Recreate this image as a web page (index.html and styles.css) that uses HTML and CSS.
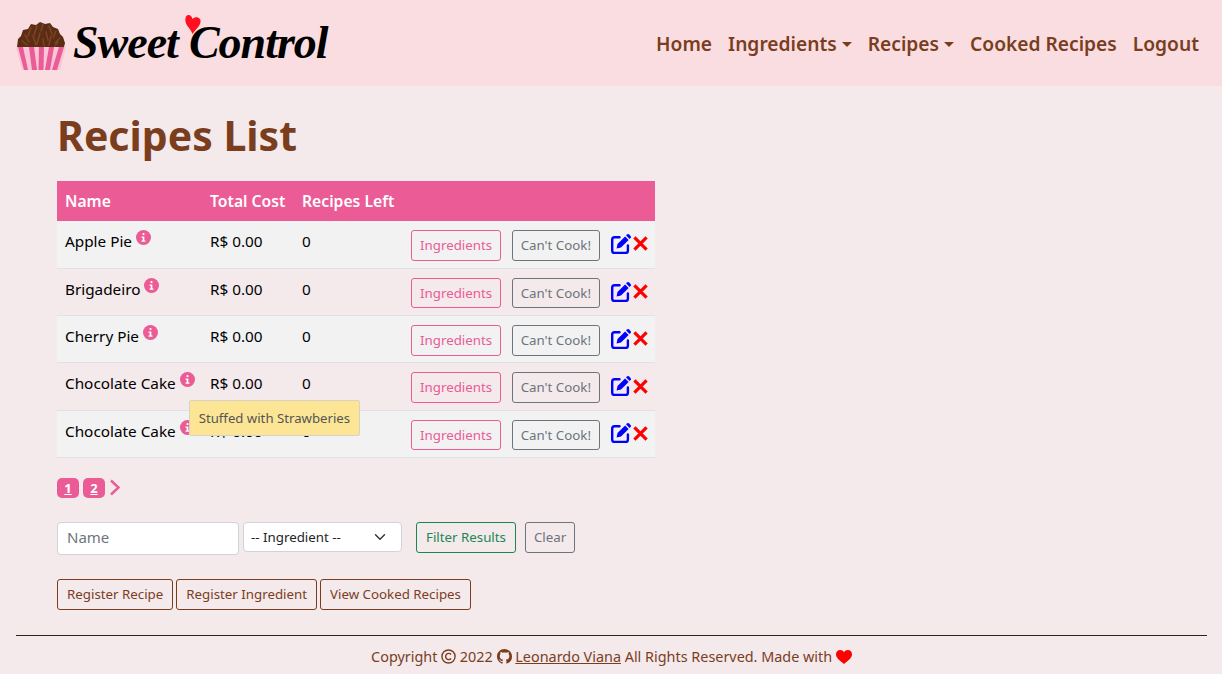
FILE: index.html
```html
<!DOCTYPE html>
<html lang="en">
<head>
  <meta charset="UTF-8" />
  <meta name="viewport" content="width=device-width, initial-scale=1" />
  <title>Sweet Control</title>
  <link rel="stylesheet" href="styles.css">
</head>
<body>

<svg class="icon-defs" width="0" height="0">
  <symbol id="icon-info" viewBox="0 0 16 16">
    <circle cx="8" cy="8" r="8" fill="#eb5b96"/>
    <rect x="6.900" y="3.200" width="2.200" height="2.200" rx="1" fill="#fff"/>
    <path d="M5.900 7h3v4.200h1.200v1.300H5.900v-1.300h1.200V8.300H5.900z" fill="#fff"/>
  </symbol>
  <symbol id="icon-edit" viewBox="0 0 20 20">
    <path d="M8.500 3.300H3.500A2.300 2.300 0 0 0 1.200 5.600v11.100A2.300 2.300 0 0 0 3.500 19h11.100a2.300 2.300 0 0 0 2.300-2.300V11.500" fill="none" stroke="#0000ff" stroke-width="2.400" stroke-linecap="round"/>
    <path d="M5.600 14.400l.9-4.400 7.600-7.600 3.500 3.500-7.600 7.600z" fill="#0000ff"/>
    <path d="M15.100 1.400l.9-.9a1.500 1.500 0 0 1 2.100 0l1.400 1.400a1.500 1.500 0 0 1 0 2.100l-.9.9z" fill="#0000ff"/>
  </symbol>
  <symbol id="icon-cross" viewBox="0 0 16 16">
    <path d="M1.500 1.500l13 13M14.500 1.500l-13 13" fill="none" stroke="#ff0000" stroke-width="3.400"/>
  </symbol>
</svg>

<nav class="navbar">
  <a class="brand" href="#">
    <svg class="brand-cupcake" width="50" height="49" viewBox="0 0 50 49">
      <path d="M0 26h50l-6 23H6z" fill="#f8c6d6"/>
      <path d="M2 26h5l5 23H8zM13 26h5l3 23h-5zM23 26h5l-.5 23h-5zM33 26h5l-4 23h-5zM43 26h5l-7 23h-5z" fill="#eb5b96"/>
      <path d="M1 26L2 18 5 15 7 9 12 8 15 3 20 4 24 1 29 3 34 2 37 6 42 8 44 13 47 16 49 22 48 26z" fill="#5a2d14"/>
      <path d="M9 14l4 7M15 7l-3 8M21 5l-3 9M27 3l-2 7M33 5l3 8M40 10l-3 7M44 17l-5 5M6 20l5 4M17 15l3 9M24 12l-3 11M30 11l2 8M35 15l-2 9M42 21l-3 4M27 18l1 7" stroke="#7d4424" stroke-width="1.500" stroke-linecap="round"/>
    </svg>
    <span class="brand-text">Sweet<span class="brand-gap"></span>Control</span>
    <svg class="brand-heart" width="16" height="19" viewBox="0 0 16 19">
      <path d="M7.500 19C6 14 1 11 .4 6 0 2 1.500 0 3.500 0 5.500 0 6.800 1.500 7.500 4 9 2.500 11 1.800 13 2.500c2.500 1 3.200 3.500 2 6.500-1.500 3.500-5 6-7.500 10z" fill="#ff0f1f"/>
    </svg>
  </a>
  <ul class="nav-links">
    <li><a href="#">Home</a></li>
    <li><a href="#" class="caret">Ingredients</a></li>
    <li><a href="#" class="caret">Recipes</a></li>
    <li><a href="#">Cooked Recipes</a></li>
    <li><a href="#">Logout</a></li>
  </ul>
</nav>

<main class="content">
  <h1>Recipes List</h1>

  <table class="recipes">
    <colgroup><col class="col-name"><col class="col-cost"><col class="col-left"><col></colgroup>
    <thead>
      <tr><th>Name</th><th>Total Cost</th><th>Recipes Left</th><th></th></tr>
    </thead>
    <tbody>
      <tr>
        <td>Apple Pie <svg class="info"><use href="#icon-info"/></svg></td>
        <td>R$ 0.00</td><td>0</td>
        <td class="cell-actions"><div class="actions"><a class="btn btn-pink" href="#">Ingredients</a><a class="btn btn-grey" href="#">Can't Cook!</a><span class="row-icons"><svg class="edit"><use href="#icon-edit"/></svg><svg class="cross"><use href="#icon-cross"/></svg></span></div></td>
      </tr>
      <tr>
        <td>Brigadeiro <svg class="info"><use href="#icon-info"/></svg></td>
        <td>R$ 0.00</td><td>0</td>
        <td class="cell-actions"><div class="actions"><a class="btn btn-pink" href="#">Ingredients</a><a class="btn btn-grey" href="#">Can't Cook!</a><span class="row-icons"><svg class="edit"><use href="#icon-edit"/></svg><svg class="cross"><use href="#icon-cross"/></svg></span></div></td>
      </tr>
      <tr>
        <td>Cherry Pie <svg class="info"><use href="#icon-info"/></svg></td>
        <td>R$ 0.00</td><td>0</td>
        <td class="cell-actions"><div class="actions"><a class="btn btn-pink" href="#">Ingredients</a><a class="btn btn-grey" href="#">Can't Cook!</a><span class="row-icons"><svg class="edit"><use href="#icon-edit"/></svg><svg class="cross"><use href="#icon-cross"/></svg></span></div></td>
      </tr>
      <tr>
        <td>Chocolate Cake <span class="info-wrap"><svg class="info"><use href="#icon-info"/></svg><span class="tooltip">Stuffed with Strawberies</span></span></td>
        <td>R$ 0.00</td><td>0</td>
        <td class="cell-actions"><div class="actions"><a class="btn btn-pink" href="#">Ingredients</a><a class="btn btn-grey" href="#">Can't Cook!</a><span class="row-icons"><svg class="edit"><use href="#icon-edit"/></svg><svg class="cross"><use href="#icon-cross"/></svg></span></div></td>
      </tr>
      <tr>
        <td>Chocolate Cake <svg class="info"><use href="#icon-info"/></svg></td>
        <td>R$ 0.00</td><td>0</td>
        <td class="cell-actions"><div class="actions"><a class="btn btn-pink" href="#">Ingredients</a><a class="btn btn-grey" href="#">Can't Cook!</a><span class="row-icons"><svg class="edit"><use href="#icon-edit"/></svg><svg class="cross"><use href="#icon-cross"/></svg></span></div></td>
      </tr>
    </tbody>
  </table>

  <div class="pagination">
    <a class="page" href="#">1</a>
    <a class="page" href="#">2</a>
    <svg class="page-next" width="12" height="17" viewBox="0 0 12 17"><path d="M2 1.500L9.500 8.500 2 15.500" fill="none" stroke="#eb5b96" stroke-width="2.400"/></svg>
  </div>

  <form class="filters">
    <input class="filter-name" type="text" placeholder="Name">
    <select class="filter-select"><option>-- Ingredient --</option></select>
    <a class="btn btn-green" href="#">Filter Results</a>
    <a class="btn btn-grey" href="#">Clear</a>
  </form>

  <div class="links">
    <a class="btn btn-brown" href="#">Register Recipe</a>
    <a class="btn btn-brown" href="#">Register Ingredient</a>
    <a class="btn btn-brown" href="#">View Cooked Recipes</a>
  </div>
</main>

<footer>
  <hr>
  <p>Copyright
    <svg class="copy" width="15" height="15" viewBox="0 0 16 16"><circle cx="8" cy="8" r="7" fill="none" stroke="#7a3e1f" stroke-width="1.500"/><path d="M10.700 5.800a3.300 3.300 0 1 0 0 4.400" fill="none" stroke="#7a3e1f" stroke-width="1.500"/></svg>
    2022
    <svg class="github" width="15" height="15" viewBox="0 0 16 16"><path fill="#7a3e1f" d="M8 0C3.580 0 0 3.580 0 8c0 3.540 2.290 6.530 5.470 7.590.4.070.55-.17.55-.38 0-.19-.01-.82-.01-1.490-2.010.37-2.530-.49-2.690-.94-.09-.23-.48-.94-.82-1.130-.28-.15-.68-.52-.01-.53.63-.01 1.080.58 1.230.82.72 1.210 1.870.87 2.330.66.07-.52.28-.87.51-1.070-1.780-.2-3.640-.89-3.640-3.950 0-.87.31-1.590.82-2.150-.08-.2-.36-1.020.08-2.120 0 0 .67-.21 2.200.82.64-.18 1.320-.27 2-.27.68 0 1.360.09 2 .27 1.530-1.040 2.200-.82 2.200-.82.44 1.100.16 1.920.08 2.120.51.56.82 1.270.82 2.150 0 3.070-1.870 3.750-3.650 3.950.29.25.54.73.54 1.480 0 1.070-.01 1.930-.01 2.200 0 .21.15.46.55.38A8.013 8.013 0 0 0 16 8c0-4.420-3.580-8-8-8z"/></svg>
    <a href="#">Leonardo Viana</a> All Rights Reserved. Made with
    <svg class="heart" width="16" height="14" viewBox="0 0 16 14"><path fill="#ff0000" d="M8 14C3 10 0 7.500 0 4.200 0 1.800 1.800 0 4.200 0 5.800 0 7.200.8 8 2.200 8.800.8 10.200 0 11.800 0 14.200 0 16 1.800 16 4.200 16 7.500 13 10 8 14z"/></svg>
  </p>
</footer>

</body>
</html>
```

FILE: styles.css
```css
* {
  box-sizing: border-box;
}
body {
  font-family: "Noto Sans", sans-serif;
  font-size: 15.300px;
  line-height: 24px;
  background-color: #f4e9eb;
  color: #000;
  margin: 0;
  padding: 0;
}
a {
  text-decoration: none;
}
.icon-defs {
  display: block;
  height: 0;
}

/* navbar */
.navbar {
  display: flex;
  justify-content: space-between;
  align-items: center;
  height: 86px;
  padding: 0 15px 0 16px;
  background-color: #f9dde1;
}
.brand {
  position: relative;
  display: flex;
  align-items: center;
  color: #000;
}
.brand-cupcake {
  flex: none;
  margin-top: 5px;
}
.brand-text {
  margin-left: 7px;
  font-family: "Liberation Serif", serif;
  font-style: italic;
  font-weight: bold;
  font-size: 46px;
  line-height: 1;
  white-space: nowrap;
  letter-spacing: -1px;
}
.brand-gap {
  display: inline-block;
  width: 11px;
}
.brand-heart {
  position: absolute;
  left: 169px;
  top: -1px;
}
.nav-links {
  display: flex;
  list-style: none;
  margin: 0;
  padding: 2px 0 0;
}
.nav-links a {
  display: block;
  padding: 0 8px;
  color: #7a3e1f;
  font-size: 19.200px;
  line-height: 30px;
  font-weight: 600;
}
.caret::after {
  content: "";
  display: inline-block;
  margin-left: 5px;
  vertical-align: 4px;
  border-top: 5px solid #7a3e1f;
  border-left: 5px solid transparent;
  border-right: 5px solid transparent;
}

/* content */
.content {
  padding: 0 41px 0 57px;
}
h1 {
  margin: 20px 0 16px;
  color: #7a3e1f;
  font-size: 41px;
  line-height: 59px;
  font-weight: bold;
}
.recipes {
  width: 598px;
  table-layout: fixed;
  border-collapse: collapse;
}
.col-name {
  width: 145px;
}
.col-cost {
  width: 92px;
}
.col-left {
  width: 109px;
}
.recipes th {
  height: 40px;
  padding: 0 8px;
  background-color: #eb5b96;
  color: #fff;
  text-align: left;
  font-size: 15.700px;
  font-weight: 600;
  white-space: nowrap;
}
.recipes td {
  height: 47.300px;
  padding: 8px 8px 0;
  vertical-align: top;
  border-bottom: 1px solid #dee2e6;
  white-space: nowrap;
}
.recipes td.cell-actions {
  padding-top: 9px;
}
.recipes tbody tr:nth-child(odd) td {
  background-color: #f2f2f2;
}
.actions {
  display: flex;
  align-items: center;
}
.actions .btn-grey {
  padding: 4px 7.500px;
}
.info-wrap {
  position: relative;
}
.info {
  width: 15px;
  height: 15px;
  vertical-align: top;
  margin-top: 1px;
}
.tooltip {
  position: absolute;
  left: 9px;
  top: 27px;
  z-index: 2;
  padding: 8px 9px;
  background-color: #fce595;
  border: 1px solid #d6d2c4;
  border-radius: 2px;
  color: #555;
  font-size: 13.200px;
  line-height: 18px;
}
.row-icons {
  display: flex;
  align-items: center;
  margin-left: 11px;
}
.edit {
  width: 20px;
  height: 20px;
  margin-top: -3px;
}
.cross {
  width: 15px;
  height: 15px;
  margin: -3px 0 0 2px;
}

/* buttons */
.btn {
  display: inline-block;
  padding: 4px 8px;
  border: 1px solid;
  border-radius: 3px;
  font-size: 13.300px;
  line-height: 20.600px;
  white-space: nowrap;
  background: transparent;
}
.btn-pink {
  color: #eb5b96;
  border-color: #eb5b96;
  margin-right: 11px;
}
.btn-grey {
  color: #6c757d;
  border-color: #6c757d;
}
.btn-green {
  padding: 4px 9px;
  color: #198754;
  border-color: #198754;
}
.btn-brown {
  padding: 4px 9px;
  color: #7a3e1f;
  border-color: #7a3e1f;
}

/* pagination */
.pagination {
  display: flex;
  align-items: center;
  gap: 4px;
  margin-top: 20px;
  height: 20px;
}
.page {
  width: 22px;
  height: 20px;
  border-radius: 5px;
  background-color: #eb5b96;
  color: #fff;
  font-size: 13px;
  font-weight: bold;
  line-height: 20px;
  text-align: center;
  text-decoration: underline;
}

/* filters */
.filters {
  display: flex;
  align-items: flex-start;
  margin-top: 24px;
}
.filter-name {
  width: 182px;
  height: 33px;
  padding: 3px 9px 5px;
  border: 1px solid #ced4da;
  border-radius: 4px;
  background: #fff;
  font-family: inherit;
  font-size: 15px;
}
.filter-name::placeholder {
  color: #6c757d;
}
.filter-select {
  width: 159px;
  height: 30px;
  margin: 0 14px 0 4px;
  padding: 0 7px;
  border: 1px solid #ced4da;
  border-radius: 4px;
  background: #fff url("data:image/svg+xml,%3csvg xmlns='http://www.w3.org/2000/svg' viewBox='0 0 16 16'%3e%3cpath fill='none' stroke='%23343a40' stroke-linecap='round' stroke-linejoin='round' stroke-width='2' d='M2 5l6 6 6-6'/%3e%3c/svg%3e") no-repeat right 14px center / 14px 12px;
  appearance: none;
  font-family: inherit;
  font-size: 13.300px;
  color: #212529;
}
.filters .btn-green {
  margin-right: 9px;
}
.links {
  display: flex;
  gap: 3px;
  margin-top: 24px;
}

/* footer */
footer {
  padding: 0 15px 0 16px;
  color: #7a3e1f;
  font-size: 14.400px;
  text-align: center;
}
footer hr {
  margin: 25px 0 9px;
  border: 0;
  border-top: 1px solid #3a1f12;
}
footer p {
  margin: 0;
}
footer a {
  color: #7a3e1f;
  text-decoration: underline;
}
.copy,
.github,
.heart {
  vertical-align: -2px;
}
```
